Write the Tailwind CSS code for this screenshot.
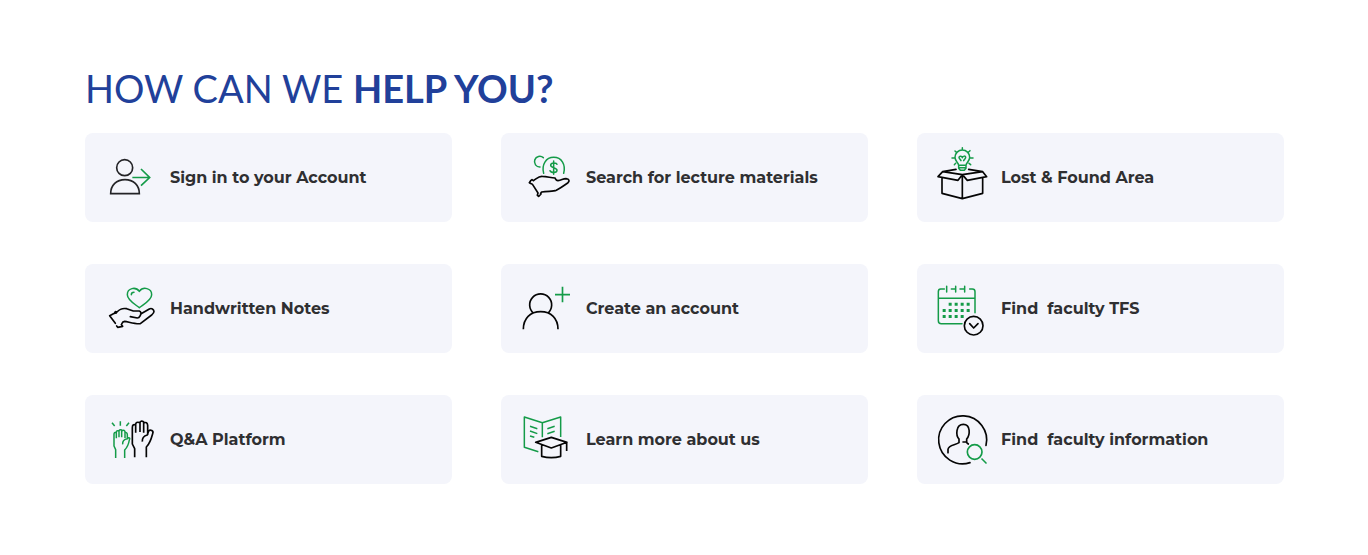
<!DOCTYPE html>
<html lang="en">
<head>
<meta charset="utf-8">
<meta name="viewport" content="width=device-width, initial-scale=1">
<title>How can we help you?</title>
<script src="https://cdn.jsdelivr.net/npm/@tailwindcss/browser@4"></script>
</head>
<body class="bg-white text-[#2f2f31] font-['Montserrat','Inter',sans-serif]">
<main class="pt-16 pb-16 pl-[85px] pr-[84px]">
  <h1 class="mb-5 text-[38px] leading-[49px] font-normal text-[#21409a] font-['Century_Gothic','Lato',sans-serif]">HOW CAN WE <strong class="font-bold">HELP YOU?</strong></h1>
  <nav aria-label="Help topics" class="grid grid-cols-3 gap-x-[49px] gap-y-[42px] text-base font-bold">

    <a href="#signin" class="flex items-center rounded-lg bg-[#f4f5fb] py-3 pl-[15px]">
      <svg class="mr-1.5 h-[65px] w-16 shrink-0" viewBox="0 0 192 195" fill="none" stroke-width="5" aria-hidden="true">
        <g stroke="#232326"><circle cx="74" cy="68" r="24"/><path d="M32 146C32 120 50 104 75 104S118 120 118 146Z"/></g>
        <path stroke="#149b48" d="M97 97.500H149M123 72L149 97.500L123 122"/>
      </svg>
      <span class="whitespace-pre">Sign in to your Account</span>
    </a>

    <a href="#materials" class="flex items-center rounded-lg bg-[#f4f5fb] py-3 pl-[15px]">
      <svg class="mr-1.5 h-[65px] w-16 shrink-0" viewBox="0 0 192 195" fill="none" stroke-width="5" stroke-linejoin="round" stroke-linecap="round" aria-hidden="true">
        <g stroke="#149b48" stroke-width="4.500"><path d="M82 38A16 16 0 1 0 72 66"/><path d="M83 85C76 59 90 37 113 37C137 37 150 59 143 85"/><path d="M123 58C121 52 104 52 104 61C104 70 123 66 123 76C123 85 105 84 102 77M113 48V88"/></g>
        <path stroke="#050505" d="M52 107C62 101 68 93 79 94C94 95 104 98 117 99C120 103 119 106 126 107C137 106 140 101 150 101C160 102 162 108 155 114C145 121 132 130 121 136C112 140 97 138 77 141C75 144 72 145 75 147L68 154L64 151L66 144L50 119C48 116 44 117 40 113L44 107L48 104Z"/>
      </svg>
      <span class="whitespace-pre">Search for lecture materials</span>
    </a>

    <a href="#lost" class="flex items-center rounded-lg bg-[#f4f5fb] py-3 pl-[15px]">
      <svg class="mr-[5px] h-[65px] w-16 shrink-0" viewBox="6 9 192 195" fill="none" stroke-width="5" stroke-linejoin="round" stroke-linecap="round" aria-hidden="true">
        <path stroke="#050505" d="M78 82L38 89L97 98L158 89L116 82M38 89L24 104L84 115L97 98L112 115L170 104L158 89M36 109V154L97 170L158 154V109M97 98V170"/>
        <g stroke="#149b48" stroke-width="4.500"><path d="M86 70C85 62 75 58 75 46A22 22 0 0 1 119 46C119 58 109 62 108 70ZM86 70V79L91 85H103L108 79V70M86 77H108M97 24V17M79 31L75 27M115 31L120 26M72 48H66M122 48H129M77 64L73 68M117 64L122 68"/><path d="M93 56C91 52 87 50 87 46C88 41 96 42 97 47C99 41 107 41 107 46C107 50 103 52 101 56"/></g>
      </svg>
      <span class="whitespace-pre">Lost &amp; Found Area</span>
    </a>

    <a href="#notes" class="flex items-center rounded-lg bg-[#f4f5fb] py-3 pl-[15px]">
      <svg class="mr-1.5 h-[65px] w-16 shrink-0" viewBox="0 0 192 195" fill="none" stroke-width="5" stroke-linejoin="round" stroke-linecap="round" aria-hidden="true">
        <g stroke="#149b48" stroke-width="4.500"><path d="M118 95C104 84 82 72 82 56C82 36 107 31 118 46C129 31 155 36 155 56C155 72 132 84 118 95Z"/><path d="M94 56C94 52 97 49 102 49"/></g>
        <path stroke="#050505" d="M46 142L29 119L43 112L49 111M43 112L46 107L51 108C59 99 69 96 80 98L100 105H118C123 107 125 112 121 118C119 122 118 126 112 126L91 122M122 114L148 99C155 95 161 100 162 106C162 112 159 114 155 117L121 143C109 145 90 139 74 136C66 137 67 141 64 146L68 151L53 154L50 150"/>
      </svg>
      <span class="whitespace-pre">Handwritten Notes</span>
    </a>

    <a href="#create" class="flex items-center rounded-lg bg-[#f4f5fb] py-3 pl-[15px]">
      <svg class="mr-1.5 h-[65px] w-16 shrink-0" viewBox="0 0 192 195" fill="none" stroke-width="5" aria-hidden="true">
        <path stroke="#050505" d="M53 112A33 33 0 1 1 95 112M22 160C22 127 43 107 74 107S126 127 126 160"/>
        <path stroke="#149b48" d="M117 56H162M139.500 32V79"/>
      </svg>
      <span class="whitespace-pre">Create an account</span>
    </a>

    <a href="#tfs" class="flex items-center rounded-lg bg-[#f4f5fb] py-3 pl-[15px]">
      <svg class="mr-[5px] h-[65px] w-16 shrink-0" viewBox="6 0 192 195" fill="none" stroke-width="5" stroke-linecap="round" stroke-linejoin="round" aria-hidden="true">
        <g stroke="#149b48" stroke-width="4.500"><path d="M43 39H32Q25 39 25 47V134Q25 143 34 143H96M25 67H135M119 39H127Q135 39 135 47V110M64 39H77M90 39H104M50 31V48M77 31V48M104 31V48"/></g>
        <path fill="#149b48" d="M56 80h9v9h-9zM74 80h9v9h-9zM92 80h9v9h-9zM110 80h9v9h-9zM38 99h9v9h-9zM56 99h9v9h-9zM74 99h9v9h-9zM92 99h9v9h-9zM110 99h9v9h-9zM38 117h9v9h-9zM56 117h9v9h-9zM74 117h9v9h-9zM92 117h9v9h-9z"/>
        <g stroke="#050505"><circle cx="131" cy="149" r="28"/><path d="M119 143L131 156L144 143"/></g>
      </svg>
      <span class="whitespace-pre">Find  faculty TFS</span>
    </a>

    <a href="#qa" class="flex items-center rounded-lg bg-[#f4f5fb] py-3 pl-[15px]">
      <svg class="mr-1.5 h-[65px] w-16 shrink-0" viewBox="0 -3 192 195" fill="none" stroke-width="5" stroke-linejoin="round" aria-hidden="true">
        <path stroke="#149b48" stroke-width="4.500" d="M47 150V125L42 114V79Q42 71 49 74M49 91V73Q49 66 57 69M57 88V70Q57 64 65 66V88M65 69Q75 63 75 74V90M75 74Q82 72 82 81V90M68 109C67 99 71 94 82 92C86 87 92 89 88 96C86 108 81 119 74 126V150M61 40V53M36 44L44 54M87 44L79 54"/>
        <path stroke="#050505" d="M104 148V122L97 108V59Q97 47 107 51M107 74V49Q107 40 120 44M120 72V44Q121 37 131 41V74M131 45Q142 40 143 52V81M127 101C126 90 131 84 142 81L146 69C151 63 162 69 158 77C154 92 150 106 139 117V148"/>
      </svg>
      <span class="whitespace-pre">Q&amp;A Platform</span>
    </a>

    <a href="#about" class="flex items-center rounded-lg bg-[#f4f5fb] py-3 pl-[15px]">
      <svg class="mr-1.5 h-[65px] w-16 shrink-0" viewBox="0 -3 192 195" fill="none" stroke-width="5" stroke-linejoin="round" aria-hidden="true">
        <path stroke="#149b48" stroke-width="4.500" d="M67 131L25 118V27L79 44L134 27V87M79 44V88M42 55L64 62M42 69L64 77M42 84L55 88M94 62L116 55M94 77L116 70"/>
        <path stroke="#050505" d="M59 103L106 88L153 103L106 120ZM77 111V145Q106 153 134 145V111M152 104V129"/>
      </svg>
      <span class="whitespace-pre">Learn more about us</span>
    </a>

    <a href="#faculty" class="flex items-center rounded-lg bg-[#f4f5fb] py-3 pl-[15px]">
      <svg class="mr-[5px] h-[65px] w-16 shrink-0" viewBox="6 -3 192 195" fill="none" stroke-width="5" stroke-linecap="round" aria-hidden="true">
        <path stroke="#050505" d="M168 112A72 72 0 1 0 120 164M54 134V124C56 111 75 112 87 104V93C77 82 77 49 100 49S120 82 110 93V102H99M110 104L115 108"/>
        <g stroke="#149b48"><circle cx="134" cy="132" r="22"/><path d="M156 153L168 165"/></g>
      </svg>
      <span class="whitespace-pre">Find  faculty information</span>
    </a>
  </nav>
</main>
</body>
</html>
